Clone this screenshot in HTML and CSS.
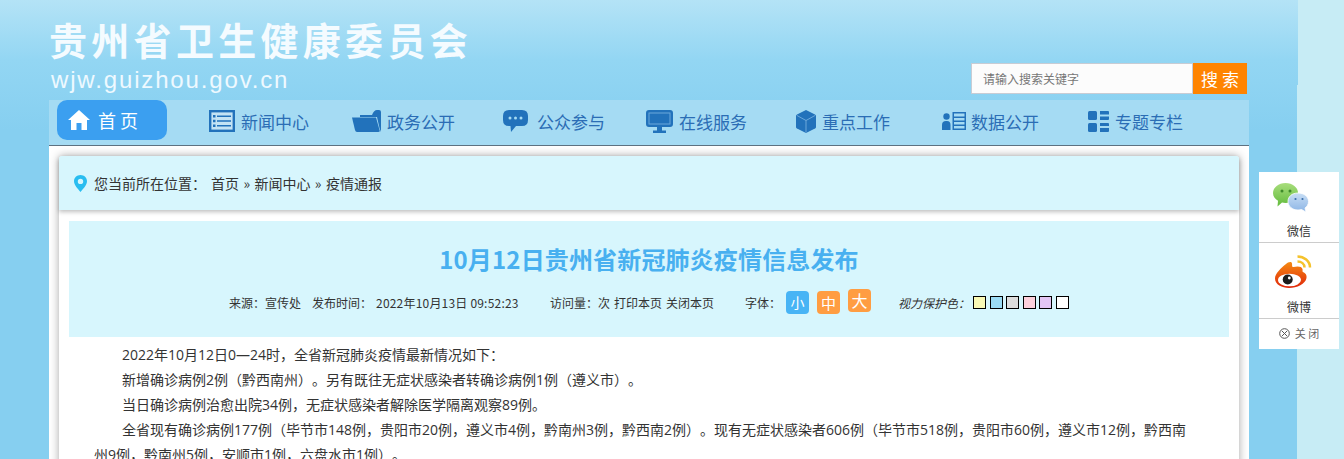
FILE: index.html
```html
<!DOCTYPE html>
<html lang="zh-CN">
  <head>
    <meta charset="UTF-8" />
    <title>10月12日贵州省新冠肺炎疫情信息发布</title>
    <link rel="stylesheet" href="styles.css">
  </head>
  <body>
    <div class="wrapper">
      <header class="site-header">
        <div class="site-brand">
          <h1 class="site-title">贵州省卫生健康委员会</h1>
          <p class="site-url">wjw.guizhou.gov.cn</p>
        </div>
        <form class="search-box">
          <input class="search-input" type="text" placeholder="请输入搜索关键字" />
          <button class="search-button" type="button">搜 索</button>
        </form>
      </header>

      <nav class="main-nav">
        <a class="nav-home">
          <svg class="home-icon" viewBox="0 0 22 20"><path d="M11 0 L22 10 L19 10 L19 20 L13.500 20 L13.500 13 L8.500 13 L8.500 20 L3 20 L3 10 L0 10 Z" /></svg>
          <span>首 页</span>
        </a>
        <a class="nav-item">
          <svg class="nav-icon" width="26" height="22" viewBox="0 0 26 22"><rect x="1.200" y="1.200" width="23.600" height="19.600" fill="#c3e3f4" stroke="#2272bb" stroke-width="2.400" /><path d="M4 5h2.500v2.500H4zM8 5.400h14v1.500H8zM4 9.700h2.500v2.500H4zM8 10.200h14v1.500H8zM4 14.500h2.500v2.500H4zM8 15h14v1.500H8z" /></svg>
          <span>新闻中心</span>
        </a>
        <a class="nav-item">
          <svg class="nav-icon" width="29" height="22" viewBox="0 0 29 22"><path d="M8 5 L20 5 Q22 0 25 0 L27 0 Q29 0 29 2 L29 22 L27.500 18 L25 7 L8 7 Z" /><path d="M0 7.500 L24 7.500 L27.800 21 Q27.800 22 26 22 L5 22 Q3.500 22 3 20 Z" /></svg>
          <span>政务公开</span>
        </a>
        <a class="nav-item item-chat">
          <svg class="nav-icon" width="25" height="23" viewBox="0 0 25 23"><path d="M6 0H19Q25 0 25 6V10Q25 16 19 16H13L8 22L7.500 16H6Q0 16 0 10V6Q0 0 6 0Z" /><circle cx="7" cy="8" r="1.500" fill="#a5dbf3" /><circle cx="12.500" cy="8" r="1.500" fill="#a5dbf3" /><circle cx="18" cy="8" r="1.500" fill="#a5dbf3" /></svg>
          <span>公众参与</span>
        </a>
        <a class="nav-item">
          <svg class="nav-icon" width="27" height="23" viewBox="0 0 27 23"><path d="M3 0H24Q27 0 27 3V14Q27 17 24 17H16V20.500H20V23H7V20.500H11V17H3Q0 17 0 14V3Q0 0 3 0Z" /><rect x="3" y="3" width="21" height="11" fill="none" stroke="#6aa8dc" /></svg>
          <span>在线服务</span>
        </a>
        <a class="nav-item">
          <svg class="nav-icon" width="20" height="23" viewBox="0 0 20 23"><path d="M10 0 L19 4.500 Q20 5 20 6 L20 17 Q20 18 19 18.500 L10 23 L1 18.500 Q0 18 0 17 L0 6 Q0 5 1 4.500 Z" /><path d="M1 5.500 L10 10.500 L19 5.500 M10 10.500 L10 22.500" fill="none" stroke="#7db5e2" stroke-width="0.800" /></svg>
          <span>重点工作</span>
        </a>
        <a class="nav-item item-data">
          <svg class="nav-icon" width="24" height="18" viewBox="0 0 24 18"><circle cx="4.500" cy="4.500" r="3.200" /><path d="M0 18V13Q0 9 4 9H5Q8.500 9 8.500 13V18Z" /><path fill-rule="evenodd" d="M10.500 0H24V18H10.500ZM12 1.500V4.500H22.500V1.500ZM12 6V8.500H22.500V6ZM12 10V12.500H22.500V10ZM12 14V16.500H22.500V14Z" /></svg>
          <span>数据公开</span>
        </a>
        <a class="nav-item">
          <svg class="nav-icon" width="21" height="21" viewBox="0 0 21 21"><rect x="0" y="0" width="9" height="9" rx="1.500" /><rect x="0" y="12" width="9" height="9" rx="1.500" /><path d="M12 0H20Q21 0 21 1V3.500H12ZM12 5.500H21V8Q21 9 20 9H12ZM12 12H20Q21 12 21 13V15H12ZM12 17H21V20Q21 21 20 21H12Z" /></svg>
          <span>专题专栏</span>
        </a>
      </nav>

      <main class="content">
        <div class="article-card">
          <div class="breadcrumb">
            <svg class="pin-icon" width="13" height="17" viewBox="0 0 13 17"><path fill-rule="evenodd" d="M6.500 0C10.200 0 13 2.800 13 6.300C13 10.500 8.500 14.500 6.500 17C4.500 14.500 0 10.500 0 6.300C0 2.800 2.800 0 6.500 0ZM6.500 3.700A2.700 2.700 0 1 0 6.500 9.100A2.700 2.700 0 1 0 6.500 3.700Z" /></svg>
            <span class="crumb-label">您当前所在位置：</span>
            <span class="crumb-path">首页 » 新闻中心 » 疫情通报</span>
          </div>

          <div class="article-head">
            <h2 class="article-title">10月12日贵州省新冠肺炎疫情信息发布</h2>
            <div class="article-meta">
              <span>来源：宣传处</span>
              <span class="meta-time">发布时间：</span>
              <span class="meta-date">2022年10月13日 09:52:23</span>
              <span class="meta-views">访问量：次</span>
              <span class="meta-link">打印本页</span>
              <span class="meta-link">关闭本页</span>
              <span class="meta-font">字体：</span>
              <a class="font-btn font-small">小</a>
              <a class="font-btn font-mid">中</a>
              <a class="font-btn font-big">大</a>
              <span class="meta-eye">视力保护色：</span>
              <i class="swatch swatch-yellow"></i>
              <i class="swatch swatch-blue"></i>
              <i class="swatch swatch-gray"></i>
              <i class="swatch swatch-pink"></i>
              <i class="swatch swatch-purple"></i>
              <i class="swatch swatch-white"></i>
            </div>
          </div>

          <div class="article-body">
            <p>2022年10月12日0—24时，全省新冠肺炎疫情最新情况如下：</p>
            <p>新增确诊病例2例（黔西南州）。另有既往无症状感染者转确诊病例1例（遵义市）。</p>
            <p>当日确诊病例治愈出院34例，无症状感染者解除医学隔离观察89例。</p>
            <p>全省现有确诊病例177例（毕节市148例，贵阳市20例，遵义市4例，黔南州3例，黔西南2例）。现有无症状感染者606例（毕节市518例，贵阳市60例，遵义市12例，黔西南州9例，黔南州5例，安顺市1例，六盘水市1例）。</p>
          </div>
        </div>
      </main>
    </div>

    <aside class="share-float">
      <div class="share-item">
        <svg class="share-icon" width="36" height="30" viewBox="0 0 36 30">
          <defs>
            <linearGradient id="wxGreen" x1="0" y1="0" x2="0" y2="1"><stop offset="0" stop-color="#a8dd7c" /><stop offset="1" stop-color="#62bb3c" /></linearGradient>
            <linearGradient id="wxBlue" x1="0" y1="0" x2="0" y2="1"><stop offset="0" stop-color="#c8def5" /><stop offset="1" stop-color="#8db5e5" /></linearGradient>
            <linearGradient id="wbRed" x1="0" y1="0" x2="0" y2="1"><stop offset="0" stop-color="#f58a12" /><stop offset="1" stop-color="#e0260a" /></linearGradient>
          </defs>
          <path fill="url(#wxGreen)" d="M12.500 0C19.500 0 25 4.500 25 10C25 15.500 19.500 20 12.500 20C11 20 10 19.800 9 19.500L4.500 23.500L5 17.800C2 16 0 13.500 0 10C0 4.500 5.500 0 12.500 0Z" />
          <circle cx="9" cy="8" r="1.500" fill="#3f8a2a" />
          <circle cx="17" cy="8" r="1.500" fill="#3f8a2a" />
          <path fill="url(#wxBlue)" stroke="#fff" stroke-width="0.800" d="M25 10C31 10 35.500 13.500 35.500 18.500C35.500 21.500 34 23.500 32 25L33 29L28.500 26.500C27.500 26.800 26.300 27 25 27C19 27 15 23 15 18.500C15 13.500 19 10 25 10Z" />
          <circle cx="22.500" cy="16" r="1.100" fill="#3a6ea8" />
          <circle cx="29.500" cy="16" r="1.100" fill="#3a6ea8" />
        </svg>
        <span>微信</span>
      </div>
      <div class="share-item share-weibo">
        <svg class="share-icon" width="37" height="33" viewBox="0 0 37 33">
          <path fill="none" stroke="#f5c22c" stroke-width="2.500" d="M22.500 1.500C29 1.500 35 6 35 12.500" />
          <path fill="none" stroke="#f5c22c" stroke-width="2.500" d="M22.500 6.500C26.500 6.500 29.500 9 29.500 12.500" />
          <path fill="url(#wbRed)" d="M11 9C13 7 16.500 6 17 8.500C17.300 10 16.500 12.500 18.500 12C22 11 27 11 27.500 14C27.800 15.500 27 16.500 28 17C30.500 18 32 20 31.500 23C30.500 29 22 33 14 33C7 33 0 29.500 0 23.500C0 18.500 6 13 11 9Z" />
          <ellipse cx="14.500" cy="25" rx="11.500" ry="6.300" fill="#fff" />
          <circle cx="12.700" cy="24.500" r="5" fill="#1c1c1c" />
          <circle cx="14.300" cy="23" r="1.400" fill="#fff" />
        </svg>
        <span>微博</span>
      </div>
      <div class="share-close">
        <svg width="11" height="11" viewBox="0 0 11 11"><circle cx="5.500" cy="5.500" r="4.800" fill="none" stroke="#555" /><path d="M3 3L8 8M8 3L3 8" stroke="#555" /></svg>
        <span>关 闭</span>
      </div>
    </aside>
  </body>
</html>
```

FILE: styles.css
```css
* {
  box-sizing: border-box;
  margin: 0;
  padding: 0;
}

html {
  overflow: hidden;
}

body {
  height: 459px;
  overflow: hidden;
  position: relative;
  font-family: "Noto Sans CJK SC", "Liberation Sans", sans-serif;
  text-spacing-trim: space-all;
  color: #333;
  background:
    linear-gradient(#c7ecf5, #c7ecf5) right top / 46px 100% no-repeat,
    linear-gradient(#c7ecf5, #c7ecf5) right 85px / 47px 100% no-repeat,
    linear-gradient(#b4e3f6 0, #93d6f3 60px, #86cff0 130px) no-repeat;
}

.wrapper {
  width: 1200px;
  margin-left: 49px;
}

/* cabecera */
.site-header {
  display: flex;
  justify-content: space-between;
  height: 100px;
  padding-right: 2px;
}

.site-title {
  height: 58px;
  padding-top: 12px;
  font-size: 38px;
  font-weight: 700;
  line-height: 54px;
  letter-spacing: 4.300px;
  color: #f4fbff;
  white-space: nowrap;
}

.site-url {
  margin: 8px 0 0 2px;
  font-family: "Liberation Sans", sans-serif;
  font-size: 24px;
  line-height: 28px;
  letter-spacing: 1.850px;
  color: #eef9ff;
}

.search-box {
  display: flex;
  margin-top: 63px;
  height: 31px;
}

.search-input {
  width: 222px;
  padding-left: 11px;
  border: 1px solid #c8ccd4;
  background: #fcfcfc;
  font-family: inherit;
  font-size: 12px;
  outline: none;
}

.search-input::placeholder {
  color: #777;
  opacity: 1;
}

.search-button {
  width: 54px;
  border: none;
  background: #ff8400;
  color: #fff;
  font-family: inherit;
  font-size: 17px;
}

/* menu */
.main-nav {
  display: grid;
  grid-template-columns: 152px 143px 151px 143px 150px 146px 146px auto;
  height: 46px;
  padding-left: 8px;
  background: #a5dbf3;
  border-bottom: 1px solid #5d7180;
}

.nav-home {
  display: flex;
  align-items: center;
  width: 110px;
  height: 40px;
  padding-left: 11px;
  border-radius: 10px;
  background: #3b9ff0;
  color: #fff;
  font-size: 18px;
}

.home-icon {
  width: 22px;
  height: 20px;
  margin-right: 8px;
  fill: #fff;
}

.nav-item {
  display: flex;
  align-items: center;
  gap: 6px;
  height: 42px;
  color: #2b6db5;
  font-size: 17px;
  white-space: nowrap;
}

.nav-icon {
  flex: none;
  fill: #2272bb;
}

.item-chat {
  gap: 9px;
}

.item-data {
  gap: 5px;
}

/* contenido */
.content {
  background: #fff;
  padding: 10px;
}

.article-card {
  background: #fff;
  border-radius: 3px 3px 0 0;
  box-shadow: 0 0 10px rgba(0, 0, 0, 0.35);
  padding-bottom: 40px;
}

.breadcrumb {
  display: flex;
  align-items: center;
  height: 54px;
  padding-left: 15px;
  background: #d7f6fd;
  border-radius: 3px 3px 0 0;
  box-shadow: 0 2px 4px rgba(0, 0, 0, 0.25);
  font-size: 14px;
}

.pin-icon {
  fill: #29bdf0;
  margin-right: 7px;
}

.crumb-label {
  width: 117px;
}

.crumb-path {
  word-spacing: 1.250px;
}

.article-head {
  height: 116px;
  margin: 11px 10px 0;
  padding-top: 20px;
  background: #d7f6fd;
}

.article-title {
  font-size: 24px;
  line-height: 36px;
  font-weight: 700;
  letter-spacing: 0.150px;
  text-align: center;
  color: #48b0f0;
}

.article-meta {
  display: flex;
  align-items: center;
  height: 26px;
  margin-top: 12px;
  padding-left: 160px;
  font-size: 12px;
  white-space: nowrap;
}

.meta-time {
  margin-left: 11px;
}

.meta-date {
  width: 174px;
  margin-left: 4px;
  letter-spacing: 0.200px;
}

.meta-link {
  margin-left: 4px;
}

.meta-font {
  margin-left: 31px;
  width: 41px;
}

.font-btn {
  display: flex;
  align-items: center;
  justify-content: center;
  width: 23px;
  height: 23px;
  margin-right: 8px;
  border-radius: 4px;
  color: #fff;
}

.font-small {
  background: #48b4f5;
  font-size: 14px;
}

.font-mid {
  background: #ff9d42;
  font-size: 15px;
}

.font-big {
  position: relative;
  top: -2px;
  background: #ff9d42;
  font-size: 16px;
}

.meta-eye {
  margin: 0 3px 0 19px;
  font-style: italic;
  width: 72px;
}

.swatch {
  display: block;
  width: 13px;
  height: 13px;
  margin-right: 3.500px;
  border: 1px solid #000;
}

.swatch-yellow { background: #f9f9b5; }
.swatch-blue { background: #9bdcf5; }
.swatch-gray { background: #dddddd; }
.swatch-pink { background: #fdd0dc; }
.swatch-purple { background: #e3c6f5; }
.swatch-white { background: #ffffff; }

.article-body {
  padding: 5px 45px 0 35px;
  font-family: "Open Sans", "Noto Sans CJK SC", sans-serif;
  font-size: 14px;
  line-height: 25px;
}

.article-body p {
  text-indent: 28px;
}

/* flotante compartir */
.share-float {
  position: absolute;
  top: 172px;
  left: 1259px;
  width: 80px;
  height: 177px;
  background: #fff;
  font-size: 12px;
  text-align: center;
}

.share-item {
  position: relative;
  height: 71px;
  border-bottom: 1px solid #ccc;
}

.share-weibo {
  height: 76px;
}

.share-icon {
  position: absolute;
  top: 11px;
  left: 14px;
}

.share-weibo .share-icon {
  top: 12px;
  left: 16px;
}

.share-item span {
  position: absolute;
  left: 28px;
  bottom: 2px;
  color: #333;
  line-height: 18px;
}

.share-close {
  display: flex;
  align-items: center;
  justify-content: center;
  gap: 5px;
  height: 28px;
  font-size: 11px;
  color: #666;
}
```
